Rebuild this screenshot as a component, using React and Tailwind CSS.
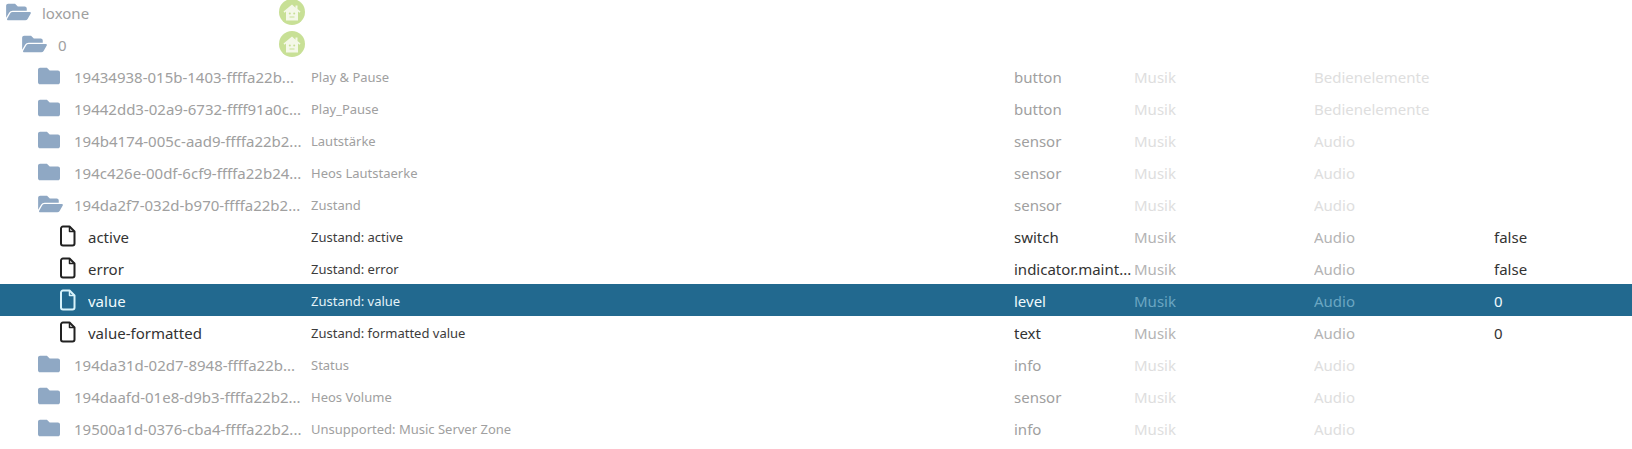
import { FaFolder, FaFolderOpen } from 'react-icons/fa'

const rows = [
  { level: 0, icon: 'open', name: 'loxone', home: true },
  { level: 1, icon: 'open', name: '0', home: true },
  { level: 2, icon: 'folder', name: '19434938-015b-1403-ffffa22b...', desc: 'Play & Pause', role: 'button', room: 'Musik', func: 'Bedienelemente' },
  { level: 2, icon: 'folder', name: '19442dd3-02a9-6732-ffff91a0c...', desc: 'Play_Pause', role: 'button', room: 'Musik', func: 'Bedienelemente' },
  { level: 2, icon: 'folder', name: '194b4174-005c-aad9-ffffa22b2...', desc: 'Lautstärke', role: 'sensor', room: 'Musik', func: 'Audio' },
  { level: 2, icon: 'folder', name: '194c426e-00df-6cf9-ffffa22b24...', desc: 'Heos Lautstaerke', role: 'sensor', room: 'Musik', func: 'Audio' },
  { level: 2, icon: 'open', name: '194da2f7-032d-b970-ffffa22b2...', desc: 'Zustand', role: 'sensor', room: 'Musik', func: 'Audio' },
  { icon: 'file', name: 'active', desc: 'Zustand: active', role: 'switch', room: 'Musik', func: 'Audio', value: 'false' },
  { icon: 'file', name: 'error', desc: 'Zustand: error', role: 'indicator.maint...', room: 'Musik', func: 'Audio', value: 'false' },
  { icon: 'file', name: 'value', desc: 'Zustand: value', role: 'level', room: 'Musik', func: 'Audio', value: '0', selected: true },
  { icon: 'file', name: 'value-formatted', desc: 'Zustand: formatted value', role: 'text', room: 'Musik', func: 'Audio', value: '0' },
  { level: 2, icon: 'folder', name: '194da31d-02d7-8948-ffffa22b...', desc: 'Status', role: 'info', room: 'Musik', func: 'Audio' },
  { level: 2, icon: 'folder', name: '194daafd-01e8-d9b3-ffffa22b2...', desc: 'Heos Volume', role: 'sensor', room: 'Musik', func: 'Audio' },
  { level: 2, icon: 'folder', name: '19500a1d-0376-cba4-ffffa22b2...', desc: 'Unsupported: Music Server Zone', role: 'info', room: 'Musik', func: 'Audio' },
]

function FileIcon() {
  return (
    <svg width="16" height="22" viewBox="0 0 16 22" fill="none" stroke="currentColor" strokeWidth="2" strokeLinejoin="round">
      <path d="M3 1.5h6.5l5 5V18.5a2 2 0 0 1-2 2H3a2 2 0 0 1-2-2V3.5a2 2 0 0 1 2-2z" />
      <path d="M9.5 1.5v5h5" strokeWidth="1.5" />
    </svg>
  )
}

function HomeBadge() {
  return (
    <div className="flex h-[26px] w-[26px] items-center justify-center rounded-full bg-[#c8e096]">
      <svg width="18" height="17" viewBox="0 0 18 17" fill="#f4f8e8">
        <path d="M9 0.5 0.5 7.5l1 1.2L3 7.6v8.9h12V7.6l1.5 1.1 1-1.2-3-2.5V1.5h-2v2.2z" />
        <circle cx="6.8" cy="9.5" r="1" fill="#c8e096" />
        <circle cx="11.2" cy="9.5" r="1" fill="#c8e096" />
        <rect x="6.5" y="12.5" width="5" height="1" fill="#c8e096" />
      </svg>
    </div>
  )
}

function Row({ row }) {
  const isFile = row.icon === 'file'
  const pad = isFile ? 'pl-[60px]' : row.level === 0 ? 'pl-[6px]' : row.level === 1 ? 'pl-[22px]' : 'pl-[38px]'

  let text = 'text-[#a0a0a0]'
  let desc = 'text-[#a0a0a0]'
  let role = 'text-[#a0a0a0]'
  let faded = 'text-[#dedede]'
  if (isFile) {
    text = 'text-[#333333]'
    desc = 'text-[#3c3c3c]'
    role = 'text-[#333333]'
    faded = 'text-[#b4b4b4]'
  }
  if (row.selected) {
    text = 'text-[#f0fafd]'
    desc = 'text-[#e4f3f8]'
    role = 'text-[#f0fafd]'
    faded = 'text-[#6ba6c2]'
  }

  return (
    <div className={`flex h-8 items-center ${row.selected ? 'bg-[#22698f]' : ''}`}>
      <div className={`flex w-[311px] shrink-0 items-center ${pad}`}>
        {row.icon === 'open' && <FaFolderOpen className="h-[22px] w-[25px] shrink-0 text-[#8fa8c4]" />}
        {row.icon === 'folder' && <FaFolder className="h-[22px] w-[22px] shrink-0 text-[#8fa8c4]" />}
        {isFile && <span className={`flex shrink-0 ${row.selected ? 'text-[#d8f3fb]' : 'text-[#212121]'}`}><FileIcon /></span>}
        <span className={`truncate pt-[2px] text-[15px] ${text} ${isFile ? 'ml-[12px] w-[200px]' : row.icon === 'open' ? 'ml-[11px]' : 'ml-[14px]'} ${row.home ? 'w-[220px]' : ''}`}>
          {row.name}
        </span>
        {row.home && <div className="ml-auto mr-[6px] shrink-0"><HomeBadge /></div>}
      </div>
      <div className={`w-[703px] shrink-0 truncate pt-[3px] text-[13px] ${desc}`}>{row.desc}</div>
      <div className={`w-[120px] shrink-0 truncate pt-[2px] text-[15px] ${role}`}>{row.role}</div>
      <div className={`w-[180px] shrink-0 truncate pt-[2px] text-[15px] ${faded}`}>{row.room}</div>
      <div className={`w-[180px] shrink-0 truncate pt-[2px] text-[15px] ${faded}`}>{row.func}</div>
      <div className={`truncate pt-[2px] text-[15px] ${role}`}>{row.value}</div>
    </div>
  )
}

export default function App() {
  return (
    <div className="h-[449px] w-[1632px] overflow-hidden bg-white font-['Noto_Sans',sans-serif]">
      <div className="-mt-1">
        {rows.map((row, i) => (
          <Row key={i} row={row} />
        ))}
      </div>
    </div>
  )
}
